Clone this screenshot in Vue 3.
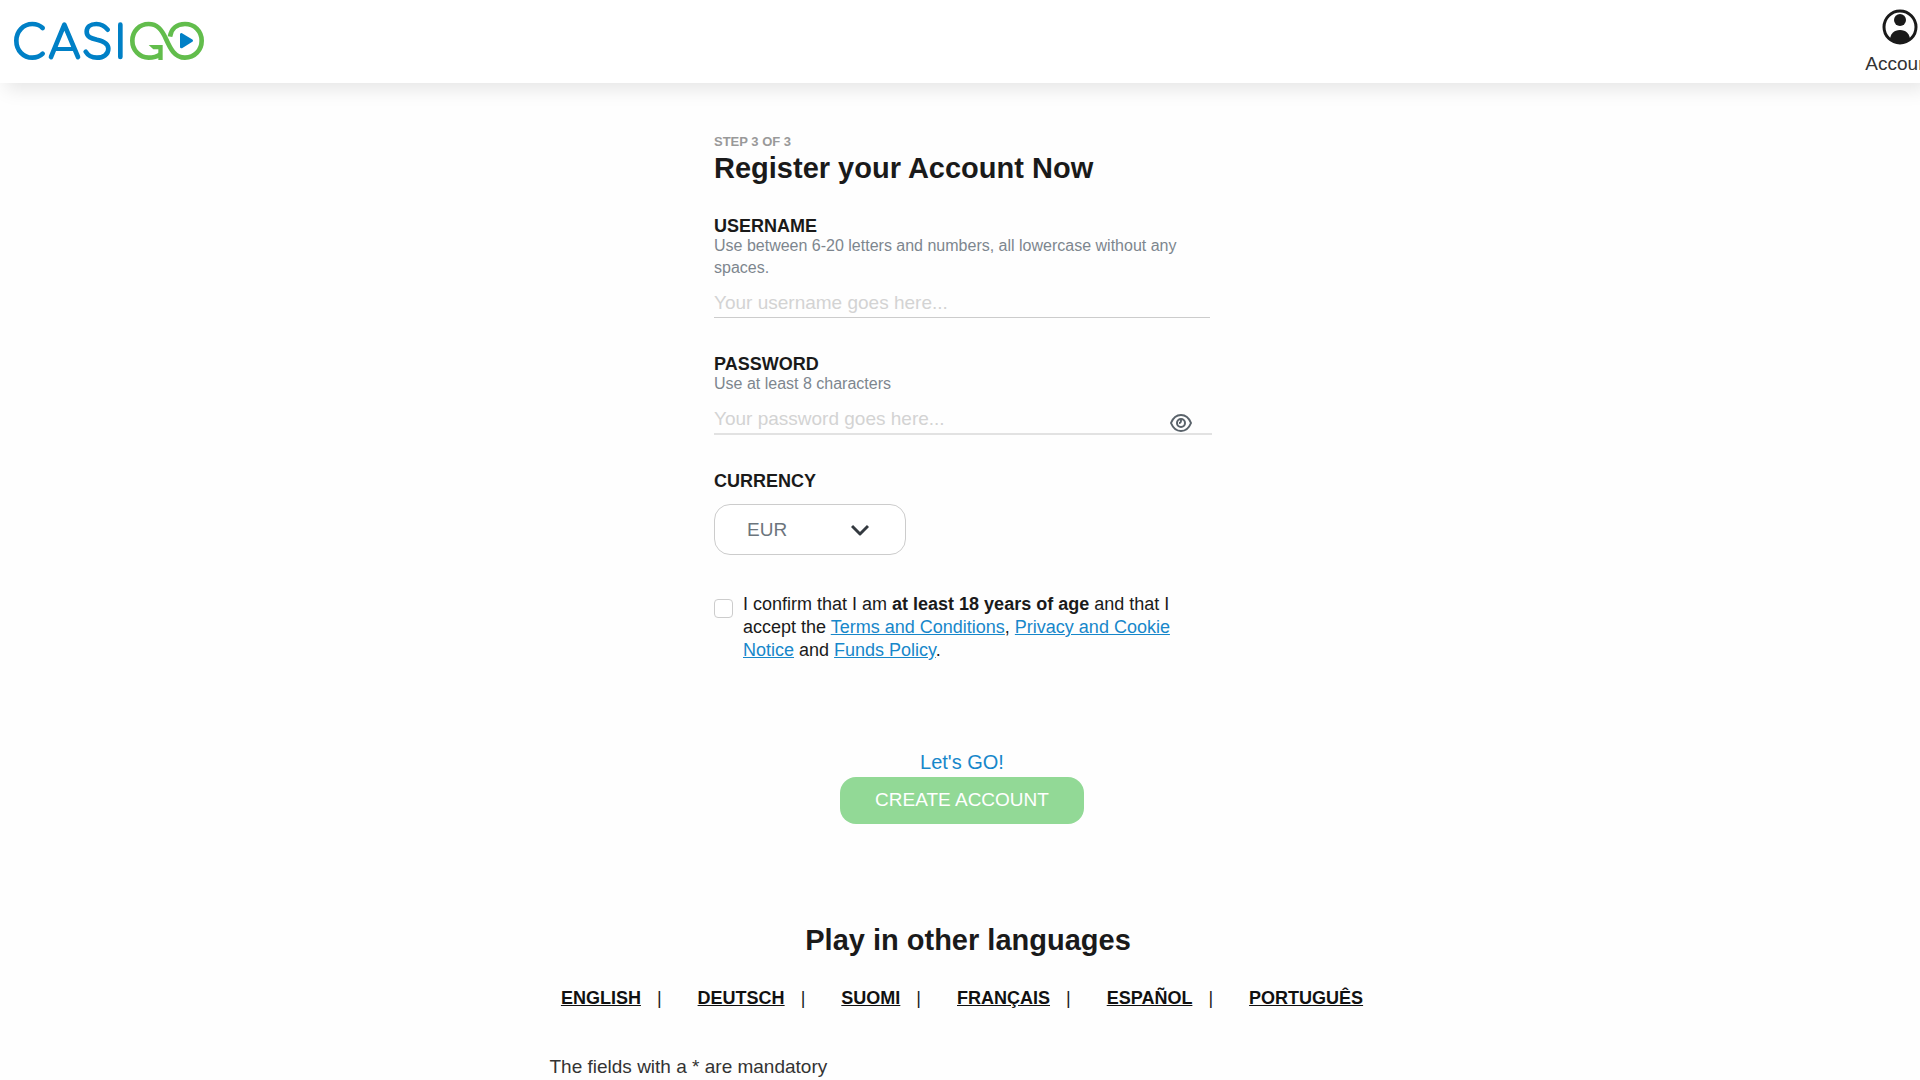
<script setup>
import { ref } from 'vue'

const username = ref('')
const password = ref('')
const showPassword = ref(false)
const currency = ref('EUR')
const accepted = ref(false)

const languages = ['ENGLISH', 'DEUTSCH', 'SUOMI', 'FRANÇAIS', 'ESPAÑOL', 'PORTUGUÊS']
</script>

<template>
  <header class="topbar">
    <a class="logo" href="#" aria-label="CasiGO">
      <svg width="195" height="42" viewBox="36 60 585 126" fill="none" stroke-linecap="round" stroke-linejoin="round">
        <g stroke="#0080c6" stroke-width="14">
          <path d="M128 84 C120 76 109 72 97 72 C70 72 49 94 49 122 C49 151 70 173 97 173 C109 173 120 169 128 161" />
          <path d="M153 171 L193 74 L234 171" />
          <path d="M169 147 H219" stroke-width="12" />
          <path d="M323 89 C313 76 302 72 289 72 C271 72 260 81 260 95 C260 111 274 115 291 119 C310 123 325 129 325 146 C325 163 310 173 291 173 C275 173 264 167 257 155" />
          <path d="M361 74 V171" />
        </g>
        <g stroke="#62bd4c" stroke-width="14">
          <path stroke-linecap="butt" d="M481 163 C471 170 459 173 446 173 C418 173 397 150 397 122 C397 94 418 72 446 72 C471 72 485 88 498 117 C511 146 524 173 555 173 C584 173 605 150 605 122 C605 94 584 72 555 72 C530 72 513 87 510 110" />
        </g>
        <path fill="#62bd4c" d="M446 135 H488 V180 H475 V148 H460 Z" />
        <path fill="#0080c6" stroke="#0080c6" stroke-width="8" d="M544 103 V141 L575 122 Z" />
      </svg>
    </a>
    <a class="account" href="#">
      <svg width="36" height="36" viewBox="0 0 36 36">
        <path fill="#1a1a1a" d="M8 31 C8 25 12 21 18 21 C24 21 28 25 28 31 L18 35 Z" />
        <circle cx="18" cy="11" r="6" fill="#1a1a1a" />
        <circle cx="18" cy="18" r="16" fill="none" stroke="#1a1a1a" stroke-width="3" />
      </svg>
      <span>Account</span>
    </a>
  </header>

  <main class="page">
    <form class="form" @submit.prevent>
      <p class="step">STEP 3 OF 3</p>
      <h1>Register your Account Now</h1>

      <div class="field">
        <label for="username">USERNAME</label>
        <p class="hint">Use between 6-20 letters and numbers, all lowercase without any spaces.</p>
        <input id="username" v-model="username" class="line-input" type="text" placeholder="Your username goes here..." />
      </div>

      <div class="field password">
        <label for="password">PASSWORD</label>
        <p class="hint">Use at least 8 characters</p>
        <input
          id="password"
          v-model="password"
          class="line-input"
          :type="showPassword ? 'text' : 'password'"
          placeholder="Your password goes here..."
        />
        <button class="reveal" type="button" aria-label="Show password" @click="showPassword = !showPassword">
          <svg width="22" height="18" viewBox="0 0 22 18" fill="none" stroke="#59626a">
            <path stroke-width="2" d="M1 9 C3 4 7 1 11 1 C15 1 19 4 21 9 C19 14 15 17 11 17 C7 17 3 14 1 9 Z" />
            <circle cx="11" cy="9" r="4" stroke-width="2" />
            <path stroke-width="2" d="M9 9 C11 9 11 8 11 6" />
          </svg>
        </button>
      </div>

      <div class="field">
        <label for="currency">CURRENCY</label>
        <div class="select">
          <select id="currency" v-model="currency">
            <option>EUR</option>
          </select>
          <svg width="18" height="12" viewBox="0 0 18 12" fill="none" stroke="#343a40" stroke-width="3" stroke-linejoin="round">
            <path d="M1 2 L9 10 L17 2" />
          </svg>
        </div>
      </div>

      <div class="field consent">
        <input id="consent" v-model="accepted" type="checkbox" />
        <label for="consent">
          I confirm that I am <b>at least 18 years of age</b> and that I accept the
          <a href="#">Terms and Conditions</a>, <a href="#">Privacy and Cookie Notice</a> and
          <a href="#">Funds Policy</a>.
        </label>
      </div>

      <div class="submit">
        <p>Let's GO!</p>
        <button type="submit" disabled>CREATE ACCOUNT</button>
      </div>
    </form>

    <section class="languages">
      <h2>Play in other languages</h2>
      <ul>
        <li v-for="language in languages" :key="language">
          <a href="#">{{ language }}</a>
        </li>
      </ul>
      <p class="mandatory">The fields with a * are mandatory</p>
    </section>
  </main>
</template>

<style>
body {
  margin: 0;
  background: #fefefe;
  overflow-x: hidden;
}
</style>

<style scoped>
.topbar,
.page {
  font-family: "Liberation Sans", Arial, sans-serif;
  color: #1a1a1a;
}

.topbar {
  display: flex;
  justify-content: space-between;
  align-items: flex-start;
  box-sizing: border-box;
  height: 83px;
  padding: 9px 0 0 12px;
  overflow: hidden;
  background: #fff;
  box-shadow: 6px 6px 18px rgba(0, 0, 0, 0.1);
}

.logo {
  padding-top: 11px;
}

.logo svg,
.account svg {
  display: block;
}

.account {
  display: flex;
  flex-direction: column;
  align-items: center;
  gap: 8px;
  margin-right: -14px;
  font-size: 19px;
  line-height: 22px;
  color: #333;
  text-decoration: none;
}

.page {
  max-width: 825px;
  margin: 0 auto;
  padding: 51px 0 0 4px;
}

.form {
  max-width: 496px;
  margin: 0 auto;
}

p,
h1,
h2,
ul {
  margin: 0;
}

.step {
  font-size: 13px;
  font-weight: bold;
  line-height: 16px;
  color: #999;
}

h1,
h2 {
  font-size: 29px;
  line-height: 36px;
}

h1 {
  margin-bottom: 31px;
}

.field {
  margin-bottom: 37px;
}

.field > label {
  display: block;
  font-size: 18px;
  font-weight: bold;
  line-height: 18px;
}

.hint {
  font-size: 16px;
  line-height: 22px;
  color: #7d868e;
}

.line-input {
  display: block;
  box-sizing: border-box;
  width: 100%;
  height: 28px;
  margin-top: 11px;
  padding: 0 0 2px;
  border: 0;
  border-bottom: 1px solid #ccc;
  background: transparent;
  font: 19px "Liberation Sans", Arial, sans-serif;
  color: #1a1a1a;
  outline: 0;
}

.line-input::placeholder {
  color: #d3d3d3;
  opacity: 1;
}

.password {
  position: relative;
  margin-right: -2px;
}

.password .line-input {
  height: 29px;
  border-bottom: 2px solid #e2e2e2;
}

.reveal {
  position: absolute;
  right: 20px;
  bottom: 3px;
  padding: 0;
  border: 0;
  background: none;
}

.reveal svg {
  display: block;
}

.select {
  position: relative;
  width: 192px;
  margin-top: 14px;
}

.select select {
  display: block;
  appearance: none;
  width: 100%;
  height: 51px;
  padding: 0 32px;
  border: 1px solid #ccc;
  border-radius: 16px;
  background: #fff;
  font: 19px "Liberation Sans", Arial, sans-serif;
  color: #6c757d;
}

.select svg {
  position: absolute;
  top: 20px;
  right: 37px;
  pointer-events: none;
}

.consent {
  display: flex;
  align-items: flex-start;
  gap: 10px;
  margin: 38px 0 88px;
}

.consent input {
  appearance: none;
  flex: none;
  box-sizing: border-box;
  width: 19px;
  height: 19px;
  margin: 6px 0 0;
  border: 1px solid #ccc;
  border-radius: 4px;
  background: #fff;
}

.consent > label {
  font-weight: normal;
  line-height: 23px;
}

.consent a {
  color: #1787ca;
}

.submit {
  display: flex;
  flex-direction: column;
  align-items: center;
  gap: 3px;
}

.submit p {
  font-size: 20px;
  line-height: 24px;
  color: #1787ca;
}

.submit button {
  height: 47px;
  padding: 0 35px 2px;
  border: 0;
  border-radius: 16px;
  background: #92d996;
  font: 19px "Liberation Sans", Arial, sans-serif;
  color: #fff;
}

.languages {
  margin-top: 98px;
}

h2 {
  padding-left: 12px;
  text-align: center;
}

ul {
  display: flex;
  justify-content: center;
  margin-top: 29px;
  padding: 0;
  list-style: none;
}

li {
  font-size: 18px;
  line-height: 22px;
}

li:not(:last-child)::after {
  content: "|";
  padding: 0 36px 0 16px;
}

li a {
  font-weight: bold;
  color: #111;
}

.mandatory {
  margin-top: 46px;
  font-size: 19px;
  line-height: 24px;
  color: #333;
}
</style>
